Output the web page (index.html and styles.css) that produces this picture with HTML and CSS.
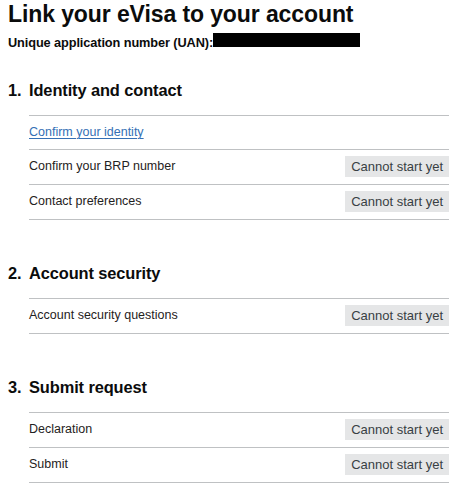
FILE: index.html
```html
<!DOCTYPE html>
<html lang="en">
<head>
<meta charset="utf-8">
<title>Link your eVisa to your account</title>
<link rel="stylesheet" href="styles.css">
</head>
<body>
<main class="page">
  <h1 class="title">Link your eVisa to your account</h1>
  <p class="uan">Unique application number (UAN):<span class="redacted"></span></p>

  <section class="section section-first">
    <h2 class="section-heading"><span class="num">1.</span><span>Identity and contact</span></h2>
    <ul class="task-list">
      <li class="task"><a class="task-link" href="#">Confirm your identity</a></li>
      <li class="task"><span class="task-name">Confirm your BRP number</span><span class="tag">Cannot start yet</span></li>
      <li class="task"><span class="task-name">Contact preferences</span><span class="tag">Cannot start yet</span></li>
    </ul>
  </section>

  <section class="section">
    <h2 class="section-heading"><span class="num">2.</span><span>Account security</span></h2>
    <ul class="task-list">
      <li class="task"><span class="task-name">Account security questions</span><span class="tag">Cannot start yet</span></li>
    </ul>
  </section>

  <section class="section">
    <h2 class="section-heading"><span class="num">3.</span><span>Submit request</span></h2>
    <ul class="task-list">
      <li class="task"><span class="task-name">Declaration</span><span class="tag">Cannot start yet</span></li>
      <li class="task"><span class="task-name">Submit</span><span class="tag">Cannot start yet</span></li>
    </ul>
  </section>
</main>
</body>
</html>
```

FILE: styles.css
```css
html, body {
  margin: 0;
  padding: 0;
  background: #ffffff;
}

body {
  font-family: "Liberation Sans", Arial, sans-serif;
  color: #0b0c0c;
}

.page {
  padding: 0 9px 0 8px;
}

.title {
  margin: 0;
  font-size: 23px;
  line-height: 28px;
  font-weight: 700;
  letter-spacing: -0.1px;
}

.uan {
  margin: 5px 0 0;
  font-size: 12.75px;
  line-height: 20px;
  font-weight: 700;
  letter-spacing: -0.1px;
}

.redacted {
  display: inline-block;
  width: 147px;
  height: 14px;
  background: #000000;
  vertical-align: baseline;
}

.section {
  margin-top: 43px;
}

.section-first {
  margin-top: 27px;
}

.section-heading {
  display: flex;
  margin: 0 0 15px;
  font-size: 16.4px;
  line-height: 20px;
  font-weight: 700;
  letter-spacing: -0.1px;
}

.num {
  width: 21px;
  flex: none;
}

.task-list {
  list-style: none;
  margin: 0 0 0 21px;
  padding: 0;
  border-top: 1px solid #bfc1c3;
}

.task {
  display: flex;
  justify-content: space-between;
  align-items: flex-start;
  padding: 6px 0 7px;
  border-bottom: 1px solid #bfc1c3;
  font-size: 12.5px;
  line-height: 20px;
}

.task-name {
  color: #1f2222;
}

.task-link {
  color: #3570b5;
  text-decoration: underline;
  text-underline-offset: 2px;
  text-decoration-thickness: 1px;
}

.tag {
  flex: none;
  background: #e5e6e7;
  color: #383f43;
  font-size: 13px;
  line-height: 21px;
  padding: 0 6px;
}
```
